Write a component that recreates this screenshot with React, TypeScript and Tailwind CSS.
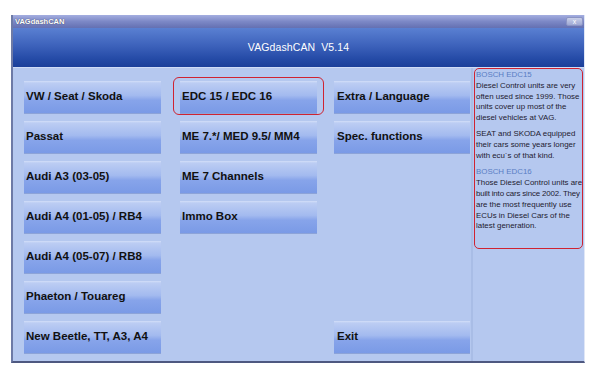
import React from "react";

const btn =
  "relative flex items-center pl-[2px] h-[33px] text-[11.5px] font-bold text-[#111] bg-[linear-gradient(to_bottom,#d3def8_0px,#bccdf3_2px,#a3baef_45%,#87a4ea_60%,#7a9ae6_100%)] border-b border-[#8ca3d8] whitespace-nowrap";

function Btn({ label, className = "" }: { label: string; className?: string }) {
  return <div className={btn + " " + className}>{label}</div>;
}

export default function App() {
  return (
    <div className="w-[605px] h-[378px] bg-white pt-[15px] pl-[11px]" style={{ fontFamily: "'Liberation Sans', Arial, sans-serif" }}>
      <div className="w-[574px] h-[348px] flex flex-col border-l-2 border-[#6d7aa6] border-b-2 border-b-[#4e5880] border-r border-r-[#dfe6f6]">
        {/* title bar */}
        <div className="h-[13px] flex items-center justify-between bg-[linear-gradient(to_bottom,#a4aee0,#7c88c6_50%,#6470b2)] pl-[2px] pr-[1px]">
          <span className="text-[7.5px] font-bold text-white leading-none [text-shadow:0_0_1px_#334]">VAGdashCAN</span>
          <div className="w-[17px] h-[9px] rounded-[2px] bg-[linear-gradient(to_bottom,#c9cfe8,#9ea8d4)] border border-[#8b94c4] flex items-center justify-center text-[7px] leading-none text-white">x</div>
        </div>
        {/* header */}
        <div className="h-[39px] flex items-center justify-center bg-[linear-gradient(to_bottom,#5a80d2,#3d62bb_45%,#244aa6_80%,#1b3f9a)]">
          <span className="text-[10.5px] text-white tracking-[0.1px] mt-[1px]">VAGdashCAN&nbsp;&nbsp;V5.14</span>
        </div>
        {/* content */}
        <div className="flex-1 flex bg-[#b5c8ef] border-t border-[#cfdcf6]">
          <div className="w-[460px] shrink-0 pt-[13px] pl-[11px] grid grid-cols-[137px_137px_134px] gap-x-[19px] auto-rows-[33px] gap-y-[7px] content-start border-r-2 border-[#a9bde6]">
            <Btn label="VW / Seat / Skoda" className="col-start-1 row-start-1" />
            <Btn label="Passat" className="col-start-1 row-start-2" />
            <Btn label="Audi A3 (03-05)" className="col-start-1 row-start-3" />
            <Btn label="Audi A4 (01-05) / RB4" className="col-start-1 row-start-4" />
            <Btn label="Audi A4 (05-07) / RB8" className="col-start-1 row-start-5" />
            <Btn label="Phaeton / Touareg" className="col-start-1 row-start-6" />
            <Btn label="New Beetle, TT, A3, A4" className="col-start-1 row-start-7" />
            <div className="relative col-start-2 row-start-1">
              <Btn label="EDC 15 / EDC 16" />
              <div className="absolute top-[-4px] left-[-7px] right-[-7px] bottom-[-1px] border-[1.5px] border-[#cf2331] rounded-[6px]" />
            </div>
            <Btn label="ME 7.*/ MED 9.5/ MM4" className="col-start-2 row-start-2" />
            <Btn label="ME 7 Channels" className="col-start-2 row-start-3" />
            <Btn label="Immo Box" className="col-start-2 row-start-4" />
            <Btn label="Extra / Language" className="col-start-3 row-start-1 -ml-[2px] pl-[3px]" />
            <Btn label="Spec. functions" className="col-start-3 row-start-2 -ml-[2px] pl-[3px]" />
            <Btn label="Exit" className="col-start-3 row-start-7 -ml-[2px] pl-[3px]" />
          </div>
          <div className="flex-1 min-w-0 pl-[1px] pr-[1px]">
            <div className="h-[181px] overflow-hidden border-[1.5px] border-[#cf2331] rounded-[5px] pl-[1px] pt-[1px] text-[7.9px] leading-[10.8px] text-[#1e2030] whitespace-nowrap">
              <div className="text-[#5a7ec4]">BOSCH EDC15</div>
              <div>Diesel Control units are very</div>
              <div>often used since 1999. Those</div>
              <div>units cover up most of the</div>
              <div>diesel vehicles at VAG.</div>
              <div className="mt-[5px]">SEAT and SKODA equipped</div>
              <div>their cars some years longer</div>
              <div>with ecu´s of that kind.</div>
              <div className="mt-[6px] text-[#5a7ec4]">BOSCH EDC16</div>
              <div>Those Diesel Control units are</div>
              <div className="tracking-[-0.15px]">built into cars since 2002. They</div>
              <div>are the most frequently use</div>
              <div>ECUs in Diesel Cars of the</div>
              <div>latest generation.</div>
            </div>
          </div>
        </div>
      </div>
    </div>
  );
}
